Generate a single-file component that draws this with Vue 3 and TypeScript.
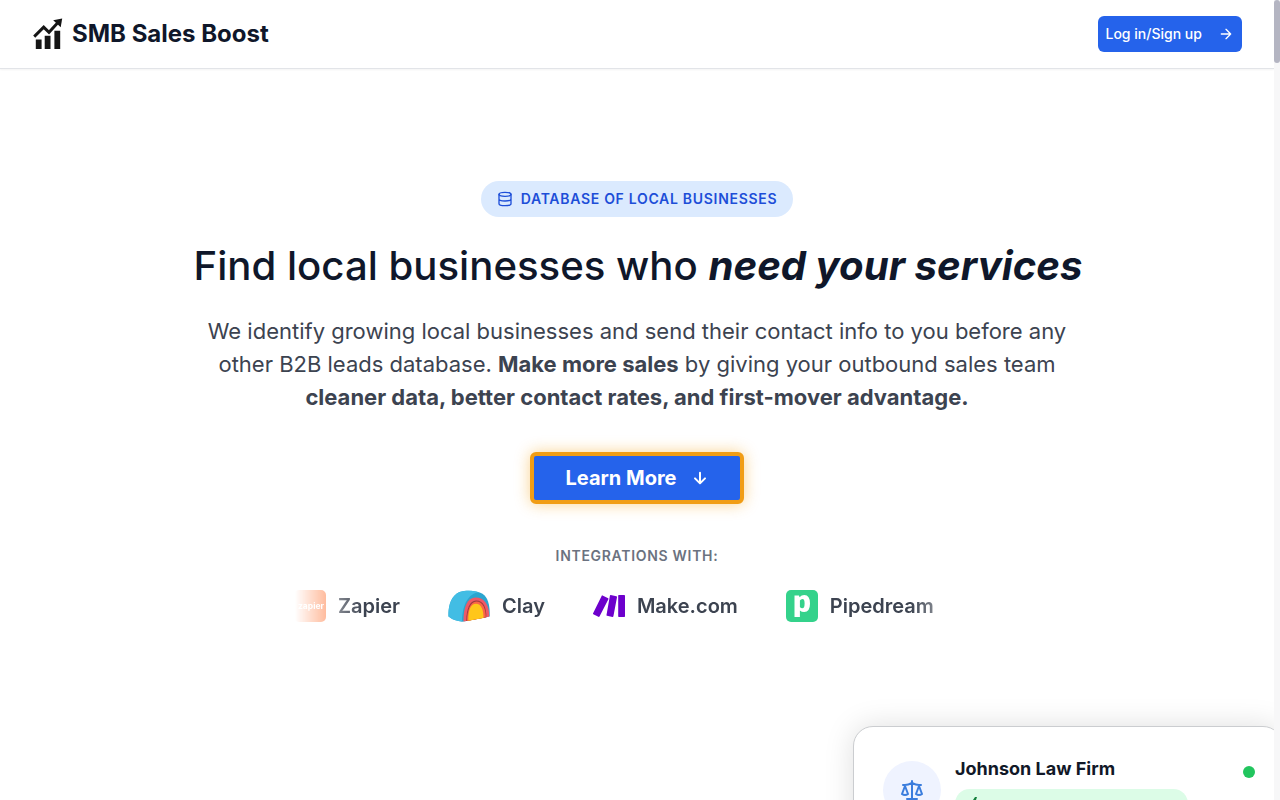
<script setup lang="ts">
interface Integration {
  name: string
  kind: 'zapier' | 'clay' | 'make' | 'pipedream'
}

const integrations: Integration[] = [
  { name: 'Zapier', kind: 'zapier' },
  { name: 'Clay', kind: 'clay' },
  { name: 'Make.com', kind: 'make' },
  { name: 'Pipedream', kind: 'pipedream' },
]
</script>

<template>
  <div class="page">
    <div class="content">
      <header class="header">
        <div class="brand">
          <svg class="brand-icon" viewBox="0 2 32 32" width="32" height="32">
            <path d="M3.8 23.5h5.8V33H3.8zM12.7 19.8h5.8V33h-5.8zM22.400 14.800h5.800V33h-5.800z" fill="#151515" />
            <path d="M2.2 20.6 11.7 11.1l5.3 5.2L26.2 6.300" fill="none" stroke="#151515" stroke-width="2.9" />
            <path d="M21.2 4.3 30.200 2.400 28.700 11.300z" fill="#151515" />
          </svg>
          <span>SMB Sales Boost</span>
        </div>
        <button class="login">
          <span>Log in/Sign up</span>
          <svg viewBox="0 0 24 24" width="16" height="16" class="line"><path d="M5 12h14M12 5l7 7-7 7" /></svg>
        </button>
      </header>

      <main class="hero">
        <div class="pill">
          <svg viewBox="0 0 24 24" width="16" height="16" class="line">
            <ellipse cx="12" cy="5" rx="9" ry="3" />
            <path d="M3 5v14a9 3 0 0 0 18 0V5M3 12a9 3 0 0 0 18 0" />
          </svg>
          <span>DATABASE OF LOCAL BUSINESSES</span>
        </div>
        <h1>Find local businesses who <em>need your services</em></h1>
        <p class="lead">
          We identify growing local businesses and send their contact info to you before any<br />
          other B2B leads database. <b>Make more sales</b> by giving your outbound sales team<br />
          <b>cleaner data, better contact rates, and first-mover advantage.</b>
        </p>
        <button class="cta">
          <span>Learn More</span>
          <svg viewBox="0 0 24 24" width="16" height="16" class="line bold"><path d="M12 4v16M19.500 12.500l-7.500 7.500-7.500-7.500" /></svg>
        </button>
        <div class="caption">INTEGRATIONS WITH:</div>
        <div class="marquee">
          <div class="track">
            <div v-for="item in integrations" :key="item.name" class="integration">
              <svg v-if="item.kind === 'zapier'" viewBox="0 0 32 32" width="32" height="32">
                <rect width="32" height="32" rx="5" fill="#ff4f00" opacity=".84" />
                <text x="4" y="18.5" class="zapier-word">zapier</text>
              </svg>
              <svg v-else-if="item.kind === 'clay'" viewBox="0 0 42 32" width="42" height="32">
                <path d="M.5 26.500C0 15 3.500 5.500 11.500 2 19-.2 29 .6 34.500 3.800 40 7.500 42 15 41.700 26.500L14.500 31.700Q6 31 .5 26.500z" fill="#2ba5cf" />
                <path d="M.5 26.500C0 15 3.500 5.500 11.500 2 18 0 26 .5 31 2.300 21 3.500 14.500 13 14 31.600Q6 31 .5 26.500z" fill="#42bde4" />
                <path d="M15.500 31.400C15.300 17 19.500 7.500 27.500 7.500 36.500 7.500 41.300 15 41.300 26.500L37.500 27.500z" fill="#ef5966" />
                <path d="M18.300 31C18.300 19 22 10.600 28 10.600 35.500 10.600 38.500 18 38.300 27.200z" fill="#98383e" />
                <path d="M19 30.900C19 20 22.800 11.500 28.200 11.500 35 11.500 37.800 19 37.800 27.300z" fill="#fa6546" />
                <path d="M20.300 30.700C20 20.500 22.500 13.700 27.800 13.700 33.500 13.700 35.500 20 35.500 27.900z" fill="#ffc61a" />
              </svg>
              <svg v-else-if="item.kind === 'make'" viewBox="0 0 32 32" width="32" height="32" class="make">
                <g fill="#6d00cc">
                  <path d="M9 5.300 15.200 8.300Q15.700 8.700 15.400 9.300L6.500 26.400Q6.100 27.100 5.400 26.800L.3 24.200Q-.3 23.800.1 23.200z" />
                  <path d="M17.700 5.100 23.400 6.300Q24.100 6.500 24 7.200L20.400 26.300Q20.200 27 19.500 26.900L14 25.800Q13.300 25.600 13.500 24.900L16.900 5.700Q17.100 5 17.700 5.100z" />
                  <rect x="25.200" y="5" width="6.800" height="22" rx=".7" />
                </g>
              </svg>
              <svg v-else viewBox="0 0 32 32" width="32" height="32">
                <rect width="32" height="32" rx="5" fill="#34d28b" />
                <path fill="#fff" fill-rule="evenodd" d="M8.500 5.500H13L13.500 7.300Q15.500 4.900 18.300 4.900 24 4.900 24 13.500 24 22 18.200 22 15.500 22 13.900 20.500V27H8.500zM13.900 17Q14.900 18.300 16.300 18.300 18.600 18.300 18.600 13.400 18.600 9 16.500 9 14.800 9 13.900 10.500z" />
              </svg>
              <span>{{ item.name }}</span>
            </div>
          </div>
        </div>
      </main>

      <section class="card">
        <div class="avatar">
          <svg viewBox="0 0 24 24" width="24" height="24" class="line">
            <path d="m16 16 3-8 3 8c-.87.65-1.920 1-3 1s-2.130-.35-3-1ZM2 16l3-8 3 8c-.87.65-1.920 1-3 1s-2.130-.35-3-1ZM7 21h10M12 3v18M3 7h2c2 0 5-1 7-2 2 1 5 2 7 2h2" />
          </svg>
        </div>
        <div class="card-body">
          <div class="card-title">Johnson Law Firm</div>
          <div class="tag">
            <svg viewBox="0 0 16 16" width="16" height="16"><path d="M8 0 2 9h5l-1 6 7-9H8l2-6z" fill="#15803d" /></svg>
          </div>
        </div>
        <div class="dot"></div>
      </section>
    </div>
    <div class="scrollbar"><div class="thumb"></div></div>
  </div>
</template>

<style>
body {
  margin: 0;
  background: #fff;
}
</style>

<style scoped>
.page {
  display: flex;
  width: 1280px;
  height: 800px;
  overflow: hidden;
  font-family: Inter, "Liberation Sans", sans-serif;
  color: #0f172a;
}
.content {
  display: flex;
  flex-direction: column;
  width: 1274px;
  height: 800px;
  overflow: hidden;
}
.scrollbar {
  width: 6px;
  background: #f7f7f8;
}
.thumb {
  height: 63px;
  border-radius: 3px;
  background: #b4b5c2;
}
.line {
  flex: none;
  fill: none;
  stroke: currentColor;
  stroke-width: 2;
  stroke-linecap: round;
  stroke-linejoin: round;
}
.bold {
  stroke-width: 3;
}
.header {
  box-sizing: border-box;
  flex: none;
  height: 69px;
  padding: 0 32px;
  display: flex;
  align-items: center;
  justify-content: space-between;
  border-bottom: 1px solid #e2e4e8;
  box-shadow: 0 1px 2px rgba(0, 0, 0, 0.05);
}
.brand {
  display: flex;
  align-items: center;
  gap: 8px;
  font-size: 24px;
  line-height: 32px;
  font-weight: 700;
}
.brand-icon {
  overflow: visible;
}
button {
  font-family: inherit;
  border: 0;
  color: #fff;
  background: #2563eb;
  display: flex;
  align-items: center;
}
.login {
  width: 144px;
  height: 36px;
  padding: 0 8px 0 7.5px;
  border-radius: 6px;
  justify-content: space-between;
  font-size: 14px;
  line-height: 20px;
  font-weight: 500;
}
.login span,
.pill span {
  padding-bottom: 1px;
}
.hero {
  flex: none;
  height: 658px;
  box-sizing: border-box;
  padding-top: 112px;
  display: flex;
  flex-direction: column;
  align-items: center;
}
.pill {
  height: 36px;
  padding: 0 16px;
  display: flex;
  align-items: center;
  gap: 8px;
  border-radius: 18px;
  background: #dbeafe;
  color: #1d4ed8;
  font-size: 14px;
  line-height: 20px;
  font-weight: 600;
  letter-spacing: 0.7px;
}
h1 {
  margin: 24px 0 0 2px;
  font-size: 40.15px;
  line-height: 50px;
  font-weight: 500;
  white-space: nowrap;
}
h1 em {
  font-weight: 700;
}
.lead {
  margin: 24px 0 0;
  font-size: 22px;
  line-height: 33px;
  text-align: center;
  color: #3c4350;
  white-space: nowrap;
}
.cta {
  box-sizing: border-box;
  margin-top: 38px;
  width: 214px;
  height: 52px;
  padding: 0 32px 0 31.5px;
  justify-content: space-between;
  border: 4px solid #f19d15;
  border-radius: 6px;
  box-shadow: 0 0 15px rgba(245, 158, 11, 0.45);
  font-size: 20px;
  font-weight: 700;
}
.caption {
  margin-top: 42px;
  font-size: 14px;
  line-height: 20px;
  font-weight: 600;
  letter-spacing: 0.7px;
  color: #6b7280;
}
.marquee {
  margin-top: 24px;
  width: 684px;
  overflow: hidden;
  mask-image: linear-gradient(to right, transparent, #000 10%, #000 90%, transparent);
}
.track {
  display: flex;
  gap: 48px;
  margin-left: -1px;
}
.integration {
  display: flex;
  flex: none;
  align-items: center;
  gap: 12px;
  font-size: 20px;
  line-height: 32px;
  font-weight: 600;
  color: #3c4350;
}
.make {
  overflow: visible;
}
.zapier-word {
  font-size: 8.5px;
  font-weight: 700;
  fill: #fff;
}
.card {
  box-sizing: border-box;
  flex: none;
  width: 430px;
  height: 180px;
  margin-left: 853px;
  margin-top: -1px;
  padding: 28px 29px;
  display: flex;
  border: 1px solid #cbcdd0;
  border-radius: 20px;
  background: #fff;
  box-shadow: 0 0 30px rgba(0, 0, 0, 0.13);
}
.avatar {
  width: 58px;
  height: 58px;
  margin-top: 6px;
  flex: none;
  display: flex;
  align-items: center;
  justify-content: center;
  border-radius: 50%;
  background: #eff3ff;
  color: #3b7ddd;
}
.card-body {
  margin-left: 14px;
}
.card-title {
  font-size: 18px;
  line-height: 27px;
  font-weight: 700;
  color: #111827;
}
.tag {
  box-sizing: border-box;
  width: 233px;
  height: 29px;
  margin-top: 7px;
  padding: 8px 12px;
  border-radius: 15px;
  background: #dcfce7;
}
.dot {
  flex: none;
  width: 12px;
  height: 12px;
  margin: 10.5px 0 0 55px;
  border-radius: 50%;
  background: #22c55e;
}
</style>
